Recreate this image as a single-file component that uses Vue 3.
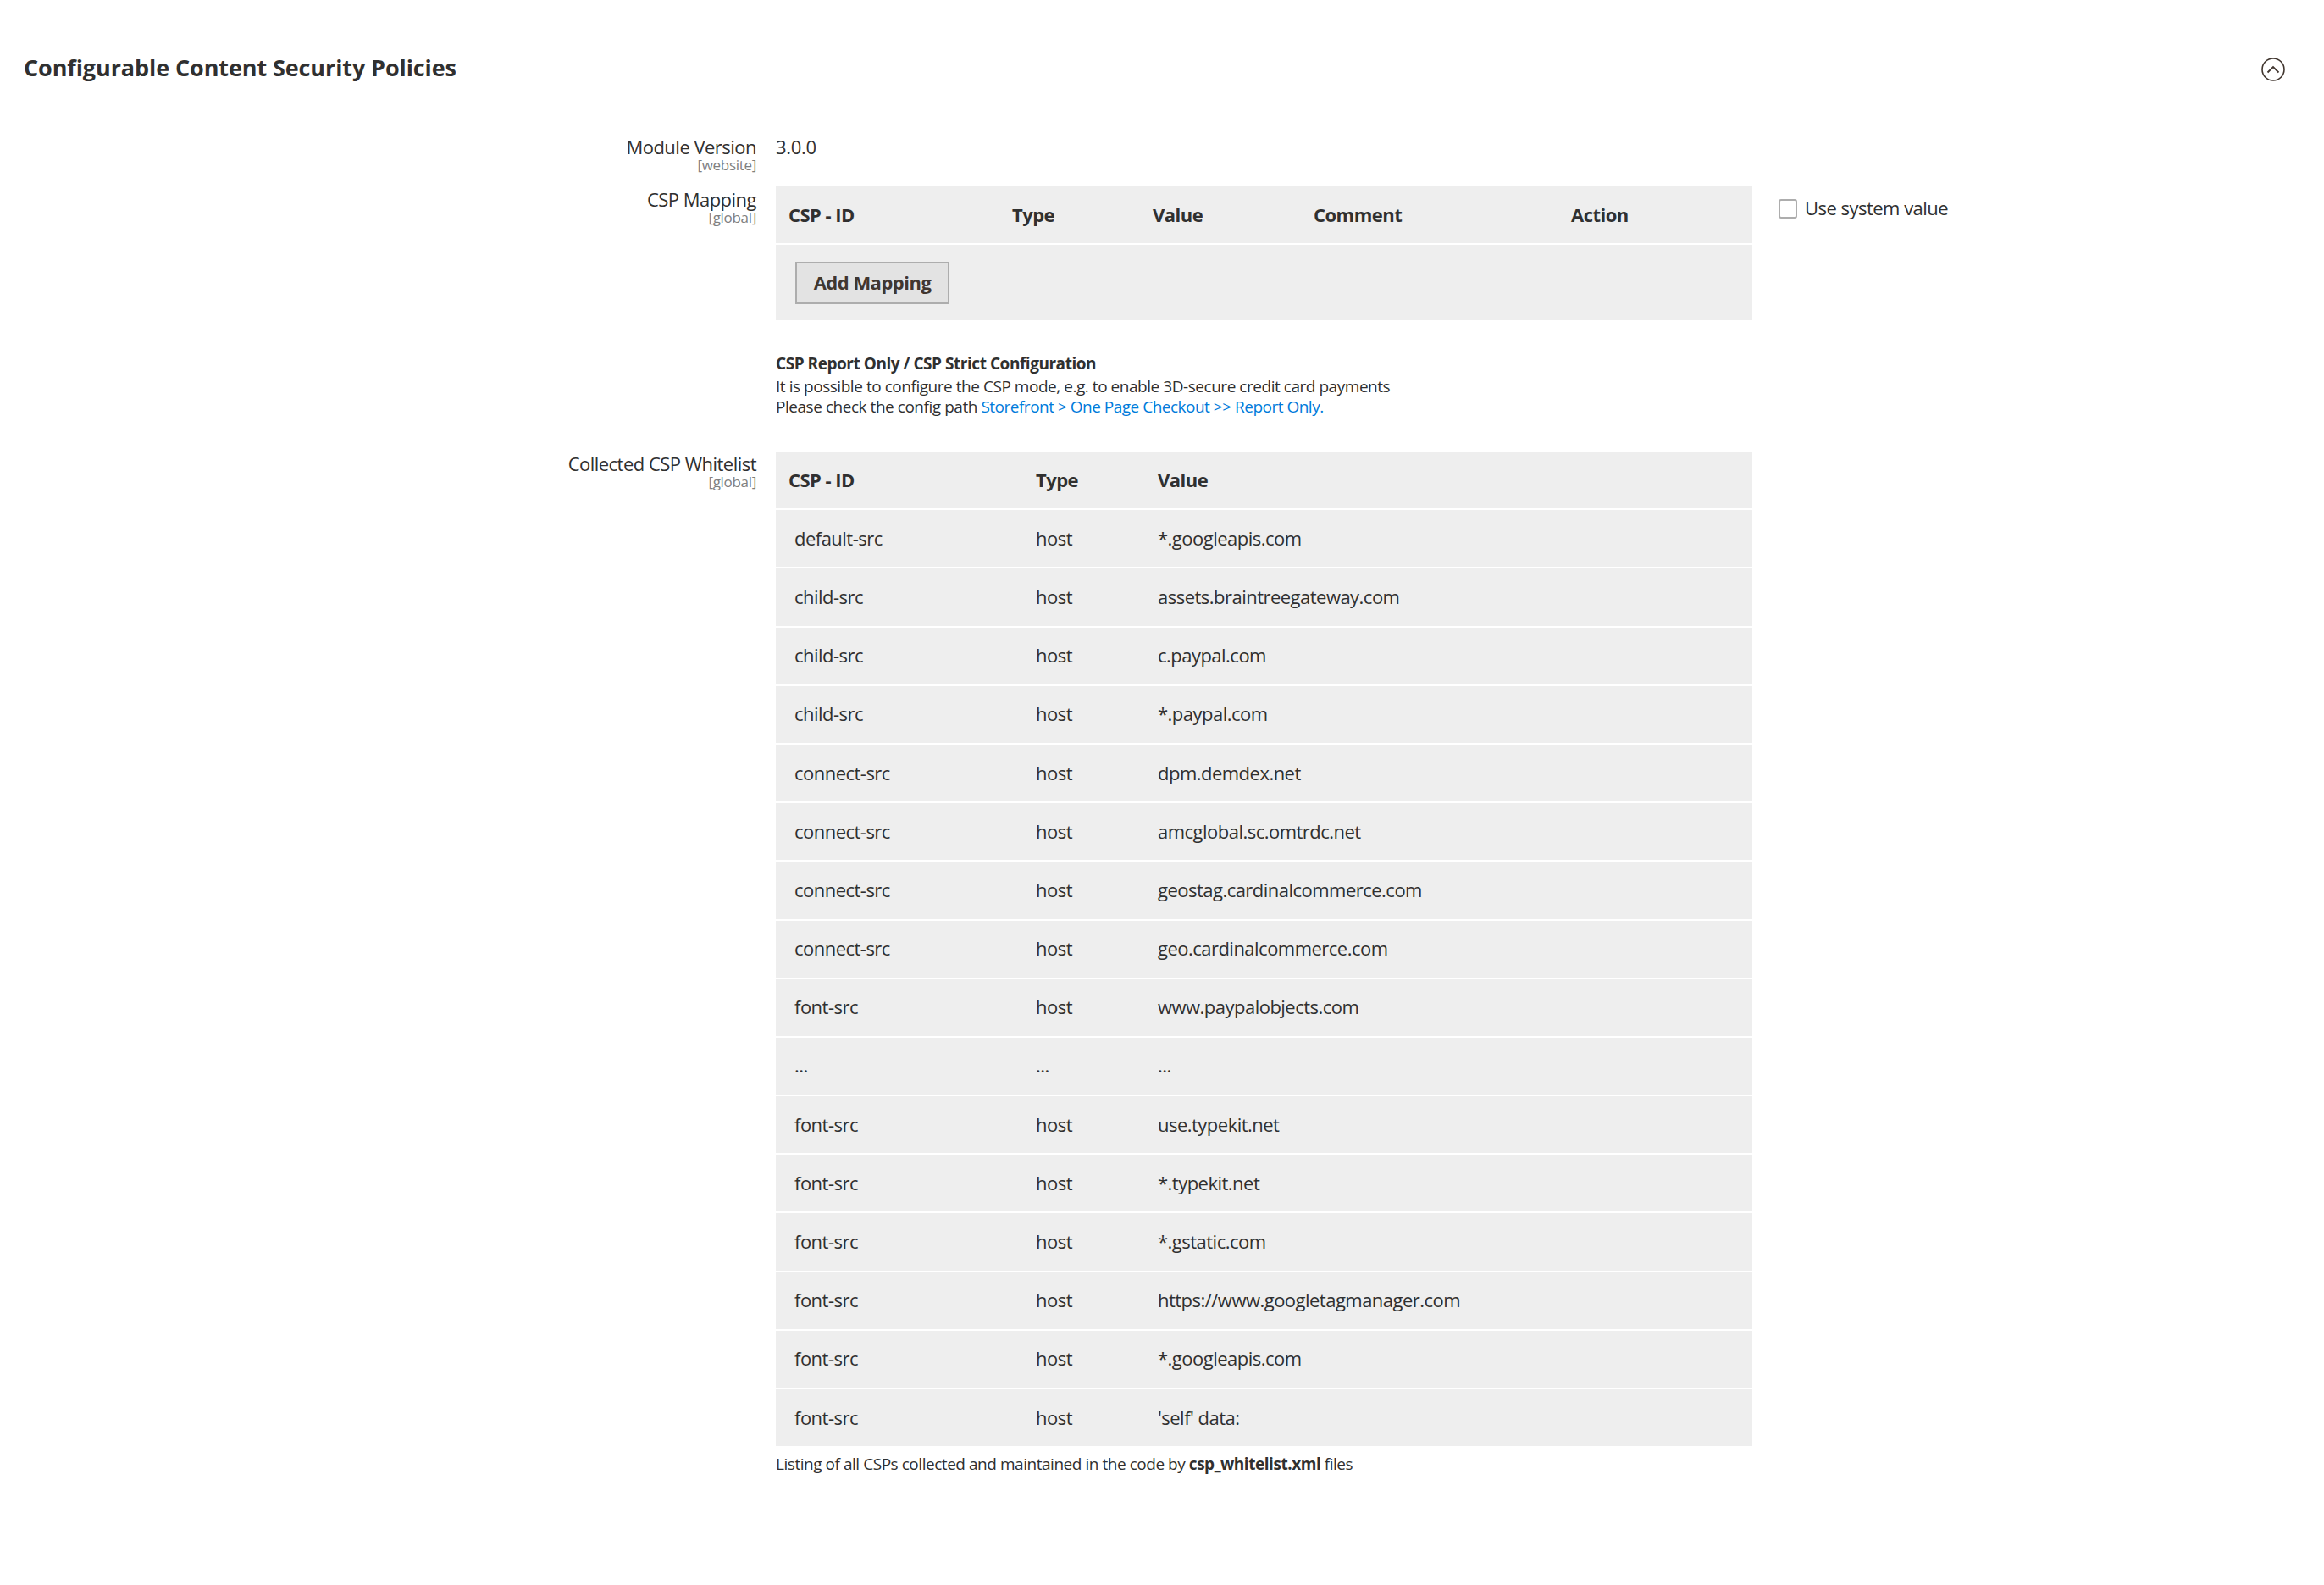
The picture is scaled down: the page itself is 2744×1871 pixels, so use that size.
<script setup>
const rows1 = [
  ['default-src','host','*.googleapis.com'],['child-src','host','assets.braintreegateway.com'],['child-src','host','c.paypal.com'],['child-src','host','*.paypal.com'],
  ['connect-src','host','dpm.demdex.net'],['connect-src','host','amcglobal.sc.omtrdc.net'],['connect-src','host','geostag.cardinalcommerce.com'],['connect-src','host','geo.cardinalcommerce.com'],
  ['font-src','host','www.paypalobjects.com'],['...','...','...'],['font-src','host','use.typekit.net'],['font-src','host','*.typekit.net'],['font-src','host','*.gstatic.com'],
  ['font-src','host','https://www.googletagmanager.com'],['font-src','host','*.googleapis.com'],['font-src','host',"'self' data:"]
]
</script>
<template>
  <div class="page">
    <div class="head">
      <h1>Configurable Content Security Policies</h1>
      <svg class="toggle" width="28" height="28" viewBox="0 0 28 28"><circle cx="14" cy="14" r="13" fill="none" stroke="#41362f" stroke-width="1.6"/><path d="M7.5 17.5l6.5-6.5 6.5 6.5" fill="none" stroke="#41362f" stroke-width="1.8"/></svg>
    </div>
    <div class="row first">
      <div class="label">Module Version<small>[website]</small></div>
      <div class="val">3.0.0</div>
    </div>
    <div class="row second">
      <div class="label">CSP Mapping<small>[global]</small></div>
      <div class="box">
        <div class="maphead"><b class="m1">CSP - ID</b><b class="m2">Type</b><b class="m3">Value</b><b class="m4">Comment</b><b>Action</b></div>
        <div class="mapbody"><button>Add Mapping</button></div>
      </div>
      <label class="sys"><span class="cb"></span>Use system value</label>
    </div>
    <div class="note">
      <b>CSP Report Only / CSP Strict Configuration</b>
      <div>It is possible to configure the CSP mode, e.g. to enable 3D-secure credit card payments</div>
      <div>Please check the config path <a>Storefront &gt; One Page Checkout &gt;&gt; Report Only</a><a>.</a></div>
    </div>
    <div class="row third">
      <div class="label">Collected CSP Whitelist<small>[global]</small></div>
      <div class="col">
        <div class="tbl">
          <div class="tr th"><b>CSP - ID</b><b>Type</b><b>Value</b></div>
          <div class="tr" v-for="(r,i) in rows1" :key="i"><span>{{r[0]}}</span><span>{{r[1]}}</span><span>{{r[2]}}</span></div>
        </div>
        <p class="foot">Listing of all CSPs collected and maintained in the code by <b>csp_whitelist.xml</b> files</p>
      </div>
    </div>
  </div>
</template>
<style scoped>
.page{width:2744px;height:1871px;box-sizing:border-box;font-family:"Open Sans",sans-serif;color:#303030;font-size:22px;letter-spacing:-.52px;padding-top:58px;overflow:hidden}
.head{display:flex;justify-content:space-between;align-items:center;padding:0 28px;height:42px}
h1{margin:0;font-size:27px;font-weight:700;color:#303030;letter-spacing:-.1px}
.toggle{margin-right:18px;margin-top:6px}
.row{display:flex}
.first{margin-top:58px;height:46px}
.second{margin-top:16px}
.third{margin-top:41px}
.label{width:893px;text-align:right;line-height:30px;color:#303030;flex:none}
.third .label{margin-top:-1px}
.label small{display:block;font-size:17px;letter-spacing:-.3px;line-height:14px;color:#808080}
.val{margin-left:23px;line-height:30px;letter-spacing:-.3px}
.box{margin-left:23px;width:1153px;background:#eee}
.maphead{display:flex;height:65px;padding-bottom:2px;align-items:center;padding-left:15px;border-bottom:2px solid #fff}
.maphead b{font-weight:700}
.m1{width:264px}.m2{width:166px}.m3{width:190px}.m4{width:304px}
.mapbody{height:89px;display:flex;align-items:center;padding-left:23px}
button{height:50px;width:182px;font:700 22px "Open Sans",sans-serif;letter-spacing:-.5px;color:#41362f;background:#e3e3e3;border:2px solid #adadad;padding:0 0 2px}
.sys{display:flex;align-items:center;height:30px;margin-left:31px;margin-top:10px}
.cb{width:22px;height:23px;border:2px solid #adadad;border-radius:3px;background:#fff;margin:2px 9px 0 0;box-sizing:border-box}
.note{margin:39px 0 0 916px;font-size:19px;line-height:24px;letter-spacing:-.46px}
.note b{display:block;margin-bottom:3px}
.note a{color:#007bdb;letter-spacing:-.5px}
.col{margin-left:23px;width:1153px}
.tbl{background:#eee}
.tr{display:grid;grid-template-columns:285px 144px 1fr;height:65.2px;padding-bottom:2px;align-items:center;border-bottom:2px solid #fff;padding-left:22px;box-sizing:content-box}
.tr:last-child{border-bottom:0}
.th{padding-left:15px;grid-template-columns:292px 144px 1fr}
.foot{margin:9px 0 0;font-size:19px;line-height:24px;letter-spacing:-.46px}
</style>
